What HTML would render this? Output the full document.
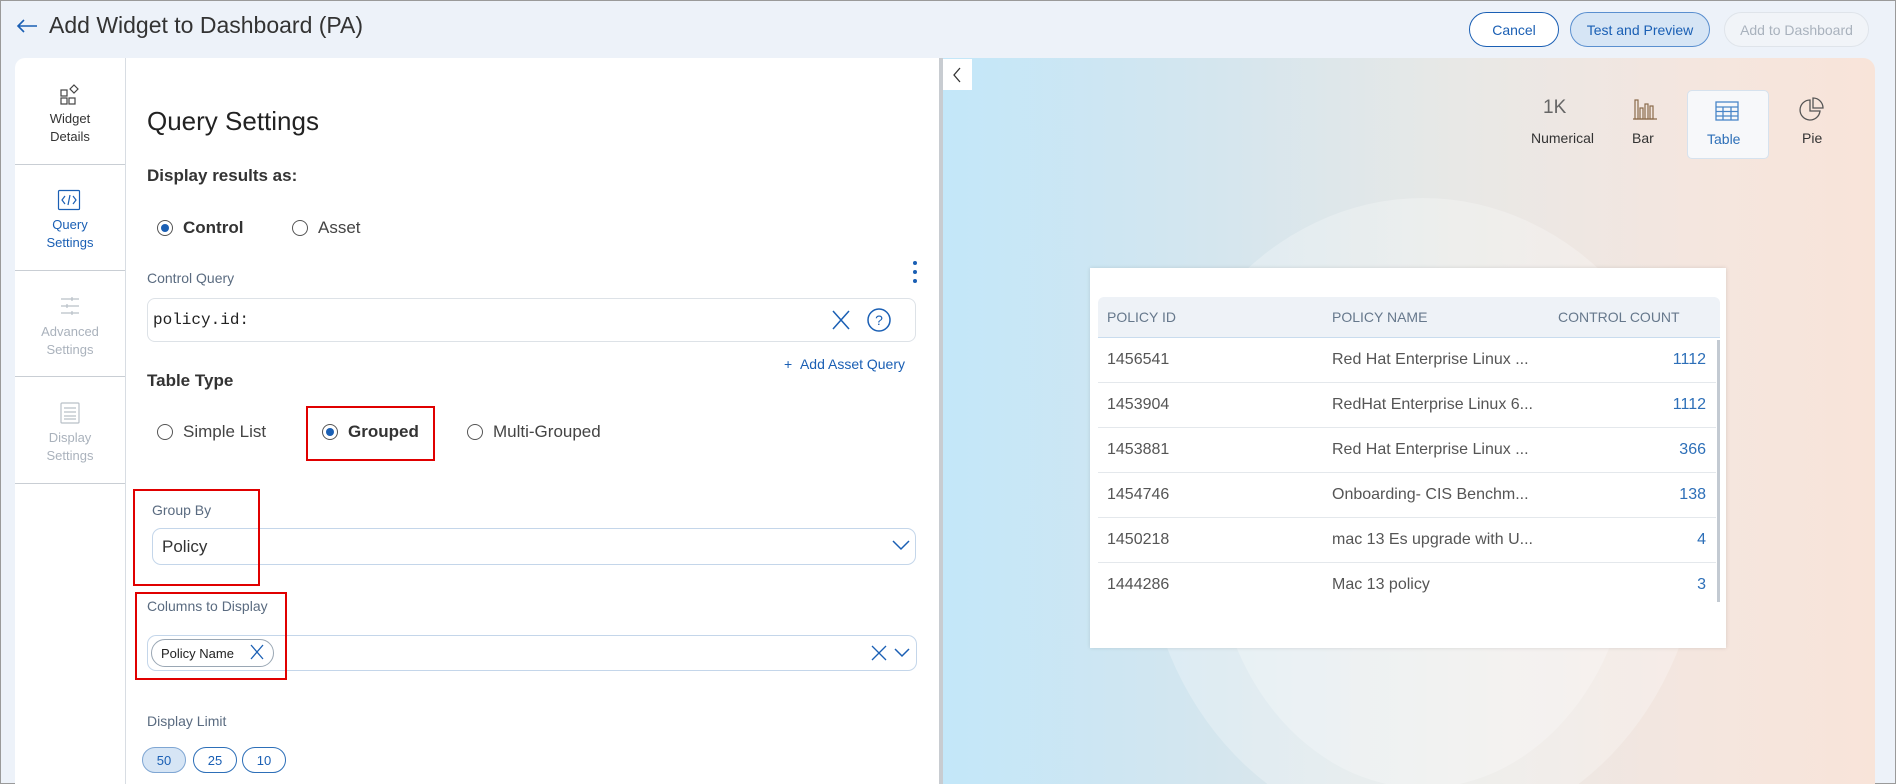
<!DOCTYPE html>
<html><head><meta charset="utf-8">
<style>
*{box-sizing:border-box;margin:0;padding:0}
html,body{width:1896px;height:784px;overflow:hidden}
body{background:#edf2f9;font-family:"Liberation Sans",sans-serif;color:#333;position:relative;border:1px solid #9a9a9a}
.a{position:absolute;white-space:nowrap}
.btn{position:absolute;top:11px;height:35px;border-radius:18px;font-size:14px;display:flex;align-items:center;justify-content:center}
.nav{position:absolute;left:14px;top:57px;width:111px;height:726px;background:#fff;border-right:1px solid #d8dde3;border-top-left-radius:10px}
.sep{position:absolute;left:0;width:110px;height:1px;background:#c9ced4}
.nt{position:absolute;left:0;width:110px;text-align:center;font-size:13px;line-height:18px}
.radio{position:absolute;width:16px;height:16px;border:1px solid #555;border-radius:50%;background:#fff}
.radio.on::after{content:"";position:absolute;left:3px;top:3px;width:8px;height:8px;border-radius:50%;background:#1a5fb4}
.lbl{font-size:14px;color:#5a6b80}
.red{position:absolute;border:2px solid #e00000}
.row{position:absolute;left:1097px;width:618px;height:45px;border-bottom:1px solid #e4e8ec;font-size:16px;color:#555}
.row span{position:absolute;top:13px}
.pill{position:absolute;top:746px;height:26px;width:44px;border:1px solid #2d6fb8;border-radius:13px;font-size:13px;color:#1a5fb4;display:flex;align-items:center;justify-content:center}
</style></head><body>
<svg class="a" style="left:14px;top:16px" width="24" height="18"><path d="M22 9H3M9 3L3 9L9 15" stroke="#1a5fb4" stroke-width="1.6" fill="none"/></svg>
<div class="a" style="left:48px;top:11px;font-size:23px;color:#333">Add Widget to Dashboard (PA)</div>
<div class="btn" style="left:1468px;width:90px;border:1.5px solid #1a5fb4;background:#fff;color:#1a5fb4">Cancel</div>
<div class="btn" style="left:1569px;width:140px;border:1px solid #5a8fcf;background:#d6e5f5;color:#1a5fb4">Test and Preview</div>
<div class="btn" style="left:1723px;width:145px;border:1px solid #dfe4ea;background:#f1f4f8;color:#a9b2bd">Add to Dashboard</div>

<div class="nav">
 <svg class="a" style="left:43px;top:25px" width="24" height="24" fill="none" stroke="#444" stroke-width="1.2"><rect x="3" y="7" width="6" height="6"/><rect x="3" y="15" width="6" height="6"/><rect x="11" y="15" width="6" height="6"/><path d="M16 2l4 4-4 4-4-4z"/></svg>
 <div class="nt" style="top:52px;color:#333">Widget<br>Details</div>
 <div class="sep" style="top:106px"></div>
 <svg class="a" style="left:42px;top:131px" width="24" height="22" fill="none" stroke="#1a5fb4" stroke-width="1.2"><rect x="1.5" y="1.5" width="21" height="19" rx="1"/><path d="M8 7l-3 4 3 4M16 7l3 4-3 4M13 6l-2 10"/></svg>
 <div class="nt" style="top:158px;color:#1a5fb4">Query<br>Settings</div>
 <div class="sep" style="top:212px"></div>
 <svg class="a" style="left:43px;top:236px" width="24" height="24" fill="none" stroke="#b9c0c8" stroke-width="1.2"><path d="M3 5h18M3 12h18M3 19h18"/><path d="M14 3v4M9 10v4M14 17v4"/></svg>
 <div class="nt" style="top:265px;color:#aab2bc">Advanced<br>Settings</div>
 <div class="sep" style="top:318px"></div>
 <svg class="a" style="left:43px;top:343px" width="24" height="24" fill="none" stroke="#b9c0c8" stroke-width="1.2"><rect x="3" y="2" width="18" height="20" rx="1"/><path d="M6 7h12M6 11h12M6 15h12M6 18h12"/></svg>
 <div class="nt" style="top:371px;color:#aab2bc">Display<br>Settings</div>
 <div class="sep" style="top:425px"></div>
</div>

<div class="a" style="left:125px;top:57px;width:813px;height:726px;background:#fff"></div>
<div class="a" style="left:938px;top:57px;width:4px;height:726px;background:#c8ccd1"></div>

<div class="a" style="left:146px;top:105px;font-size:26px;color:#222">Query Settings</div>
<div class="a" style="left:146px;top:165px;font-size:17px;font-weight:bold;color:#333">Display results as:</div>
<div class="radio on" style="left:156px;top:219px"></div>
<div class="a" style="left:182px;top:217px;font-size:17px;font-weight:bold;color:#333">Control</div>
<div class="radio" style="left:291px;top:219px"></div>
<div class="a" style="left:317px;top:217px;font-size:17px;color:#444">Asset</div>

<div class="a lbl" style="left:146px;top:269px">Control Query</div>
<svg class="a" style="left:910px;top:259px" width="8" height="24"><circle cx="4" cy="3" r="2" fill="#1a5fb4"/><circle cx="4" cy="12" r="2" fill="#1a5fb4"/><circle cx="4" cy="21" r="2" fill="#1a5fb4"/></svg>
<div class="a" style="left:146px;top:297px;width:769px;height:44px;border:1px solid #dde2e7;border-radius:8px"></div>
<div class="a" style="left:152px;top:310px;font-family:'Liberation Mono',monospace;font-size:16px;color:#222">policy.id:</div>
<svg class="a" style="left:830px;top:308px" width="20" height="22"><path d="M2 2l16 18M18 2L2 20" stroke="#1a5fb4" stroke-width="1.5"/></svg>
<svg class="a" style="left:865px;top:306px" width="26" height="26"><circle cx="13" cy="13" r="11" stroke="#1a5fb4" stroke-width="1.5" fill="none"/><text x="13" y="18" font-size="14" text-anchor="middle" fill="#1a5fb4" font-family="Liberation Sans">?</text></svg>
<div class="a" style="left:783px;top:355px;font-size:14px;color:#1a5fb4">+ &nbsp;Add Asset Query</div>
<div class="a" style="left:146px;top:370px;font-size:17px;font-weight:bold;color:#333">Table Type</div>

<div class="radio" style="left:156px;top:423px"></div>
<div class="a" style="left:182px;top:421px;font-size:17px;color:#444">Simple List</div>
<div class="radio on" style="left:321px;top:423px"></div>
<div class="a" style="left:347px;top:421px;font-size:17px;font-weight:bold;color:#333">Grouped</div>
<div class="radio" style="left:466px;top:423px"></div>
<div class="a" style="left:492px;top:421px;font-size:17px;color:#444">Multi-Grouped</div>
<div class="red" style="left:305px;top:405px;width:129px;height:55px"></div>

<div class="a lbl" style="left:151px;top:501px">Group By</div>
<div class="a" style="left:151px;top:527px;width:764px;height:37px;border:1px solid #c4d6ea;border-radius:9px"></div>
<div class="a" style="left:161px;top:536px;font-size:17px;color:#333">Policy</div>
<svg class="a" style="left:891px;top:538px" width="18" height="12"><path d="M1 2l8 8 8-8" stroke="#1a5fb4" stroke-width="1.5" fill="none"/></svg>
<div class="red" style="left:132px;top:488px;width:127px;height:97px"></div>

<div class="a lbl" style="left:146px;top:597px">Columns to Display</div>
<div class="a" style="left:146px;top:634px;width:770px;height:36px;border:1px solid #c4d6ea;border-radius:9px"></div>
<div class="a" style="left:150px;top:638px;width:123px;height:28px;border:1px solid #9aa7b4;border-radius:14px"></div>
<div class="a" style="left:160px;top:645px;font-size:13px;color:#222">Policy Name</div>
<svg class="a" style="left:249px;top:643px" width="14" height="16"><path d="M1 1l12 14M13 1L1 15" stroke="#1a5fb4" stroke-width="1.3"/></svg>
<svg class="a" style="left:870px;top:644px" width="16" height="16"><path d="M1 1l14 14M15 1L1 15" stroke="#1a5fb4" stroke-width="1.3"/></svg>
<svg class="a" style="left:893px;top:647px" width="16" height="10"><path d="M1 1l7 7 7-7" stroke="#1a5fb4" stroke-width="1.5" fill="none"/></svg>
<div class="red" style="left:134px;top:591px;width:152px;height:88px"></div>

<div class="a lbl" style="left:146px;top:712px">Display Limit</div>
<div class="pill" style="left:141px;background:#d6e5f5;border-color:#7fa6d3">50</div>
<div class="pill" style="left:192px">25</div>
<div class="pill" style="left:241px">10</div>

<div class="a" style="left:942px;top:57px;width:932px;height:726px;border-top-right-radius:12px;background:linear-gradient(90deg,#c3e7f9 0%,#d5e6ee 30%,#e8e8e6 55%,#f4e6df 80%,#f8e4d9 100%);overflow:hidden">
 <div class="a" style="left:200px;top:140px;width:560px;height:640px;border-radius:50%;background:rgba(255,255,255,0.25)"></div>
 <div class="a" style="left:270px;top:210px;width:420px;height:520px;border-radius:50%;background:rgba(255,255,255,0.25)"></div>
</div>
<div class="a" style="left:942px;top:58px;width:29px;height:31px;background:#fff"></div>
<svg class="a" style="left:950px;top:65px" width="12" height="18"><path d="M9 2L3 9l6 7" stroke="#333" stroke-width="1.3" fill="none"/></svg>

<div class="a" style="left:1542px;top:96px;font-size:19px;color:#666">1K</div>
<div class="a" style="left:1530px;top:129px;font-size:14px;color:#333">Numerical</div>
<svg class="a" style="left:1631px;top:97px" width="26" height="22" fill="none" stroke="#8a6a4a" stroke-width="1.2"><path d="M1 21h24"/><rect x="3" y="2" width="3" height="19"/><rect x="8" y="10" width="3" height="11"/><rect x="13" y="6" width="3" height="15"/><rect x="18" y="8" width="3" height="13"/></svg>
<div class="a" style="left:1631px;top:129px;font-size:14px;color:#333">Bar</div>
<div class="a" style="left:1686px;top:89px;width:82px;height:69px;background:#f7f8fa;border:1px solid #d6e2ee;border-radius:5px"></div>
<svg class="a" style="left:1714px;top:100px" width="24" height="20" fill="none" stroke="#4a86c8" stroke-width="1.3"><rect x="1" y="1" width="22" height="18"/><path d="M1 6h22M1 10.5h22M1 15h22M8 6v13M16 6v13"/></svg>
<div class="a" style="left:1706px;top:130px;font-size:14px;color:#2d6fb8">Table</div>
<svg class="a" style="left:1797px;top:96px" width="26" height="26" fill="none" stroke="#555" stroke-width="1.3"><path d="M12 3a10 10 0 1 0 10 11H12z"/><path d="M15 1v10h10A10 10 0 0 0 15 1z"/></svg>
<div class="a" style="left:1801px;top:129px;font-size:14px;color:#333">Pie</div>

<div class="a" style="left:1089px;top:267px;width:636px;height:380px;background:#fff;box-shadow:0 0 4px rgba(0,0,0,0.12)"></div>
<div class="a" style="left:1097px;top:296px;width:622px;height:41px;background:#eef2f7;border-bottom:1px solid #c9dcee;border-top-left-radius:6px;border-top-right-radius:6px;font-size:14px;color:#66788c">
 <span class="a" style="left:9px;top:12px">POLICY ID</span><span class="a" style="left:234px;top:12px">POLICY NAME</span><span class="a" style="left:460px;top:12px">CONTROL COUNT</span>
</div>
<div class="row" style="top:337px"><span style="left:9px">1456541</span><span style="left:234px">Red Hat Enterprise Linux ...</span><span style="right:10px;color:#2d6fb8">1112</span></div>
<div class="row" style="top:382px"><span style="left:9px">1453904</span><span style="left:234px">RedHat Enterprise Linux 6...</span><span style="right:10px;color:#2d6fb8">1112</span></div>
<div class="row" style="top:427px"><span style="left:9px">1453881</span><span style="left:234px">Red Hat Enterprise Linux ...</span><span style="right:10px;color:#2d6fb8">366</span></div>
<div class="row" style="top:472px"><span style="left:9px">1454746</span><span style="left:234px">Onboarding- CIS Benchm...</span><span style="right:10px;color:#2d6fb8">138</span></div>
<div class="row" style="top:517px"><span style="left:9px">1450218</span><span style="left:234px">mac 13 Es upgrade with U...</span><span style="right:10px;color:#2d6fb8">4</span></div>
<div class="row" style="top:562px;border-bottom:none"><span style="left:9px">1444286</span><span style="left:234px">Mac 13 policy</span><span style="right:10px;color:#2d6fb8">3</span></div>
<div class="a" style="left:1716px;top:339px;width:3px;height:262px;background:#c3cad2"></div>
</body></html>
